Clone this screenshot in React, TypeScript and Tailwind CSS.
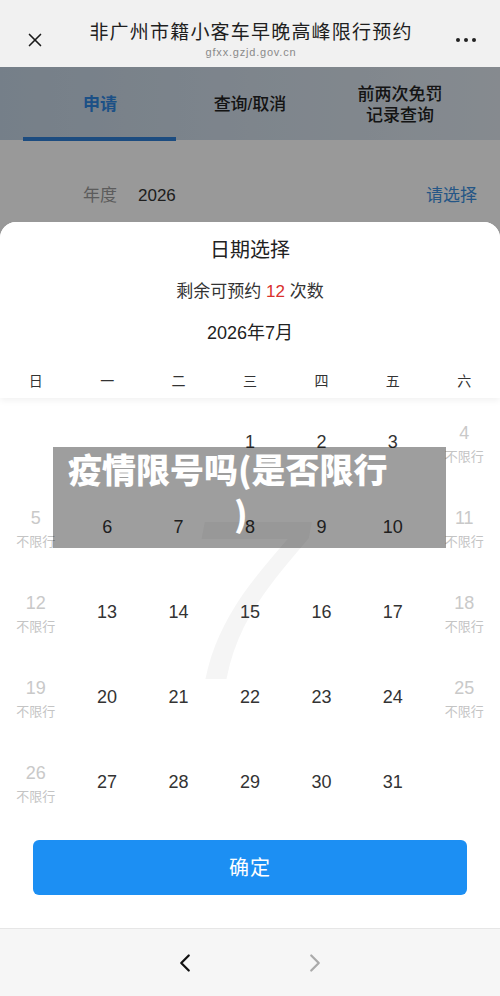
import { X, ChevronLeft, ChevronRight } from "lucide-react";

const font = { fontFamily: '"Liberation Sans", "Noto Sans CJK SC", sans-serif' };

type Cell = { day: number | null; weekend: boolean };

function buildMonth(): Cell[][] {
  const cells: Cell[] = [];
  for (let i = 0; i < 3; i++) cells.push({ day: null, weekend: false });
  for (let d = 1; d <= 31; d++) {
    const col = cells.length % 7;
    cells.push({ day: d, weekend: col === 0 || col === 6 });
  }
  while (cells.length % 7 !== 0) cells.push({ day: null, weekend: false });
  const rows: Cell[][] = [];
  for (let i = 0; i < cells.length; i += 7) rows.push(cells.slice(i, i + 7));
  return rows;
}

const weekdays = ["日", "一", "二", "三", "四", "五", "六"];

function DayCell({ cell }: { cell: Cell }) {
  if (cell.day === null) return <div />;
  if (cell.weekend) {
    return (
      <div className="flex flex-col items-center justify-center mt-[8px]">
        <span className="text-[18px] leading-[22px] text-[#c9c9c9] -mt-[3px]">{cell.day}</span>
        <span className="text-[13px] leading-[18px] text-[#c4c4c4] mt-[4px]">不限行</span>
      </div>
    );
  }
  return (
    <div className="flex items-center justify-center">
      <span className="text-[18px] leading-[22px] text-[#333]">{cell.day}</span>
    </div>
  );
}

export default function App() {
  const rows = buildMonth();
  return (
    <div className="w-[500px] h-[996px] flex flex-col overflow-hidden bg-white" style={font}>
      {/* browser title bar */}
      <div className="h-[67px] bg-[#f1f1f1] flex items-center px-[24px] pt-[12px] shrink-0">
        <X className="w-[22px] h-[22px] text-[#1a1a1a]" strokeWidth={1.8} />
        <div className="flex-1 flex flex-col items-center">
          <div className="text-[19px] leading-[24px] tracking-[1.2px] text-[#1f1f1f]">非广州市籍小客车早晚高峰限行预约</div>
          <div className="text-[11px] leading-[14px] tracking-[0.8px] text-[#8a8a8a]">gfxx.gzjd.gov.cn</div>
        </div>
        <div className="flex gap-[4px] items-center">
          <span className="w-[4px] h-[4px] rounded-full bg-[#222]" />
          <span className="w-[4px] h-[4px] rounded-full bg-[#222]" />
          <span className="w-[4px] h-[4px] rounded-full bg-[#222]" />
        </div>
      </div>

      {/* page + sheet */}
      <div className="relative flex-1">
        <div className="h-[73px] bg-gradient-to-r from-[#c4d4e4] via-[#d2deea] to-[#dfe7ef] flex px-[25px]">
          <div className="w-[150px] relative flex items-center justify-center">
            <span className="text-[17px] font-bold text-[#2f86e0] mt-[3px]">申请</span>
            <div className="absolute left-[-2px] right-[-1px] bottom-[-1px] h-[4px] bg-[#2f7fd6]" />
          </div>
          <div className="w-[150px] flex items-center justify-center">
            <span className="text-[17px] font-medium text-[#222] mt-[3px]">查询/取消</span>
          </div>
          <div className="w-[150px] flex items-center justify-center">
            <span className="text-[17px] leading-[21px] font-medium text-[#222] text-center mt-[3px]">前两次免罚<br />记录查询</span>
          </div>
        </div>
        <div className="h-[120px] bg-white flex items-start pt-[43px] px-[83px] pr-[23px]">
          <span className="text-[17px] text-[#999]">年度</span>
          <span className="text-[17px] text-[#333] ml-[21px]">2026</span>
          <span className="ml-auto text-[17px] text-[#3d8fe0]">请选择</span>
        </div>

        <div className="absolute inset-0 bg-black/40" />

        {/* bottom sheet */}
        <div className="absolute left-0 right-0 top-[155px] bottom-0 bg-white rounded-t-[16px] flex flex-col">
          <div className="pt-[16px] pb-[7px] shadow-[0_3px_6px_rgba(0,0,0,0.05)] relative z-10 bg-white rounded-t-[16px]">
            <div className="text-center text-[20px] leading-[24px] text-[#222]">日期选择</div>
            <div className="text-center text-[17px] leading-[24px] text-[#333] mt-[18px]">
              剩余可预约 <span className="text-[#d9302c]">12</span> 次数
            </div>
            <div className="text-center text-[18px] leading-[24px] text-[#222] mt-[17px]">2026年7月</div>
            <div className="grid grid-cols-7 mt-[26px]">
              {weekdays.map((w) => (
                <div key={w} className="text-center text-[14px] leading-[20px] text-[#333]">{w}</div>
              ))}
            </div>
          </div>

          <div className="relative">
            <div className="absolute left-[178px] top-[88px] text-[228px] leading-[228px] italic text-[#f5f5f5] select-none" style={{ fontFamily: '"Liberation Sans", sans-serif' }}>7</div>
            <div className="relative grid grid-cols-7 pt-[1px]">
              {rows.map((r, i) =>
                r.map((c, j) => (
                  <div key={`${i}-${j}`} className="h-[85px] flex items-center justify-center">
                    <DayCell cell={c} />
                  </div>
                ))
              )}
            </div>
          </div>

          <div className="px-[33px] mt-[16px]">
            <button className="w-full h-[55px] rounded-[6px] bg-[#1c8ff3] text-white text-[20px] tracking-[1px]">确定</button>
          </div>
        </div>

        {/* caption overlay */}
        <div className="absolute left-[53px] top-[380px] w-[393px] h-[101px] bg-[rgba(0,0,0,0.38)]">
          <div className="text-[34px] leading-[44px] font-black text-white pl-[15px] whitespace-nowrap" style={{ fontFamily: '"Noto Sans CJK SC", sans-serif' }}>疫情限号吗(是否限行</div>
          <div className="text-[34px] leading-[44px] font-black text-white pl-[181px]" style={{ fontFamily: '"Noto Sans CJK SC", sans-serif' }}>)</div>
        </div>
      </div>

      {/* browser bottom bar */}
      <div className="h-[68px] bg-[#f6f6f6] border-t border-[#e6e6e6] flex items-center justify-center gap-[100px] shrink-0">
        <ChevronLeft className="w-[30px] h-[30px] text-[#111]" strokeWidth={1.8} />
        <ChevronRight className="w-[30px] h-[30px] text-[#aaa]" strokeWidth={1.8} />
      </div>
    </div>
  );
}
